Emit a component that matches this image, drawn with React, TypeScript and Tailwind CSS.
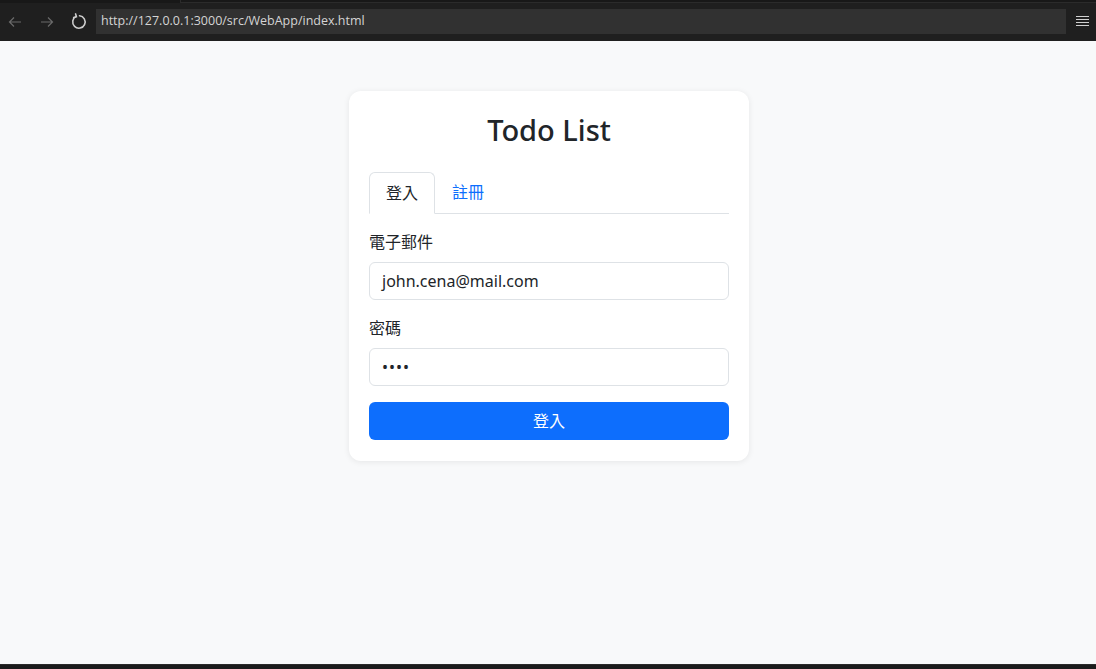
import React from 'react';

const font = { fontFamily: '"Noto Sans", "Noto Sans CJK TC", sans-serif' };

function BrowserBar() {
  return (
    <div className="h-[41px] bg-[#1f1f1f] relative flex items-center">
      <div className="absolute top-0 left-0 right-0 h-[3px] bg-[#181818]">
        <div className="absolute left-[180px] right-0 top-0 h-[3px] border-l border-b border-[#2b2b2b] bg-[#181818]" />
      </div>
      <div className="flex items-center pl-[6px] mt-[2px]">
        <button className="w-[16px] h-[16px] ml-[1px] text-[#6a6a6a]">
          <svg viewBox="0 0 16 16" width="16" height="16" fill="none" stroke="currentColor" strokeWidth="1.2">
            <path d="M14 8H2.5M7 3.5L2.5 8L7 12.5" />
          </svg>
        </button>
        <button className="w-[16px] h-[16px] ml-[16px] text-[#6a6a6a]">
          <svg viewBox="0 0 16 16" width="16" height="16" fill="none" stroke="currentColor" strokeWidth="1.2">
            <path d="M2 8h11.5M9 3.5L13.5 8L9 12.5" />
          </svg>
        </button>
        <button className="w-[18px] h-[18px] ml-[15px] text-[#cccccc]">
          <svg viewBox="0 0 18 18" width="18" height="18" fill="none" stroke="currentColor" strokeWidth="1.6" strokeLinecap="round">
            <path d="M6.2 3.4A6.2 6.2 0 1 0 9.5 2.8" />
            <path d="M5.6 0.9L6.4 3.6L3.7 4.4" />
          </svg>
        </button>
      </div>
      <div className="ml-[8px] mt-[1px] w-[970px] h-[25px] bg-[#313131] flex items-center px-[5px] text-[12.5px] text-[#d4d4d4]" style={{ fontFamily: '"Open Sans", sans-serif' }}>
        http://127.0.0.1:3000/src/WebApp/index.html
      </div>
      <div className="ml-[10px] mt-[1px] flex flex-col gap-[2px]">
        <div className="w-[13px] h-[1px] bg-[#d0d0d0]" />
        <div className="w-[13px] h-[1px] bg-[#d0d0d0]" />
        <div className="w-[13px] h-[1px] bg-[#d0d0d0]" />
        <div className="w-[13px] h-[1px] bg-[#d0d0d0]" />
      </div>
    </div>
  );
}

export default function App() {
  return (
    <div className="w-[1096px] h-[669px] overflow-hidden flex flex-col" style={font}>
      <BrowserBar />
      <div className="flex-1 bg-[#f8f9fa] flex justify-center pt-[50px] pl-[2px]">
        <div className="w-[400px] h-[370px] bg-white rounded-[12px] shadow-[0_1px_6px_rgba(0,0,0,0.08)] p-[20px] text-[#212529]">
          <h2 className="text-[29px] leading-[37px] font-medium text-center mb-[24px]">Todo List</h2>
          <div className="flex border-b border-[#dee2e6] h-[42px]">
            <div className="px-[16px] h-[42px] leading-[40px] text-[16px] border border-[#dee2e6] border-b-white rounded-t-[6px] bg-white">登入</div>
            <div className="px-[17px] h-[41px] leading-[40px] text-[16px] text-[#0d6efd]">註冊</div>
          </div>
          <div className="mt-[16px]">
            <label className="block text-[16px] leading-[24px] mb-[8px]">電子郵件</label>
            <div className="h-[38px] border border-[#dee2e6] rounded-[6px] px-[12px] flex items-center text-[16px]">john.cena@mail.com</div>
          </div>
          <div className="mt-[16px]">
            <label className="block text-[16px] leading-[24px] mb-[8px]">密碼</label>
            <div className="h-[38px] border border-[#dee2e6] rounded-[6px] px-[12px] flex items-center text-[16px] tracking-[1px]">••••</div>
          </div>
          <button className="mt-[16px] w-full h-[38px] bg-[#0d6efd] rounded-[6px] text-white text-[16px]">登入</button>
        </div>
      </div>
      <div className="h-[5px] bg-[#1b1b1b] border-t border-[#2a2a2a]" />
    </div>
  );
}
